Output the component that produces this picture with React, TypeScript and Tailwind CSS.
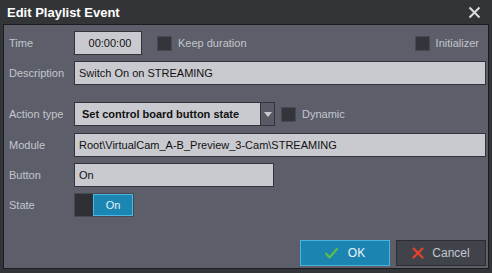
import { FC, ReactNode } from "react";

const Label: FC<{ children: ReactNode }> = ({ children }) => (
  <span className="w-[65px] shrink-0 text-[#c4c6cd]">{children}</span>
);

const Check: FC<{ label: string }> = ({ label }) => (
  <div className="flex items-center gap-[6px]">
    <span className="w-[15px] h-[15px] bg-[#34353b] border border-[#484a53]" />
    <span className="text-[#c4c6cd]">{label}</span>
  </div>
);

const inputCls =
  "h-[24px] bg-[#c9cacf] border border-[#33343a] text-[#111] flex items-center pl-[4px]";

const App: FC = () => {
  return (
    <div className="w-[492px] h-[273px] bg-[#333438] flex flex-col font-['Liberation_Sans',Arial,sans-serif] text-[11px] leading-none">
      {/* title bar */}
      <div className="h-[24px] shrink-0 flex items-center justify-between pl-[7px] pr-[11px]">
        <span className="text-[13px] font-bold text-white">
          Edit Playlist Event
        </span>
        {closeIcon}
      </div>

      {/* body */}
      <div className="mx-[3px] h-[245px] border border-[#1b1c1f] bg-[#5c5f6a] flex flex-col pl-[5px] pr-[2px] pt-[6px] pb-[2px]">
        <div className="h-[24px] flex items-center">
          <Label>Time</Label>
          <div className={`${inputCls} w-[68px] justify-center pl-0`}>
            00:00:00
          </div>
          <div className="ml-[15px]">
            <Check label="Keep duration" />
          </div>
          <div className="ml-auto mr-[7px]">
            <Check label="Initializer" />
          </div>
        </div>

        <div className="h-[24px] flex items-center mt-[6px]">
          <Label>Description</Label>
          <div className={`${inputCls} flex-1`}>Switch On on STREAMING</div>
        </div>

        <div className="h-[24px] flex items-center mt-[17px]">
          <Label>Action type</Label>
          <div className="h-[24px] w-[201px] flex border border-[#33343a]">
            <div className="flex-1 bg-[#c9cacf] flex items-center pl-[7px] font-bold text-[#111]">
              Set control board button state
            </div>
            <div className="w-[14px] bg-[#585b65] border-l border-[#33343a] flex items-center justify-center">
              {arrowIcon}
            </div>
          </div>
          <div className="ml-[6px]">
            <Check label="Dynamic" />
          </div>
        </div>

        <div className="h-[24px] flex items-center mt-[7px]">
          <Label>Module</Label>
          <div className={`${inputCls} flex-1`}>
            Root\VirtualCam_A-B_Preview_3-Cam\STREAMING
          </div>
        </div>

        <div className="h-[24px] flex items-center mt-[6px]">
          <Label>Button</Label>
          <div className={`${inputCls} w-[200px]`}>On</div>
        </div>

        <div className="h-[24px] flex items-center mt-[6px]">
          <Label>State</Label>
          <div className="h-[24px] w-[60px] flex border border-[#474951]">
            <div className="w-[18px] bg-[#2f3035]" />
            <div className="flex-1 bg-[#1b86b4] border border-[#4cb6e4] flex items-center justify-center text-[#e6f0f5]">
              On
            </div>
          </div>
        </div>

        <div className="flex-1" />

        <div className="flex justify-end gap-[6px]">
          <button className="w-[90px] h-[26px] bg-[#1b84b0] border border-[#47b4e4] flex items-center justify-center gap-[10px] text-[#eef4f7] text-[12px]">
            {okIcon}
            <span>OK</span>
          </button>
          <button className="w-[90px] h-[26px] bg-[#41434b] border border-[#2c2d32] flex items-center justify-center gap-[8px] text-[#c3c7cf] text-[12px]">
            {cancelIcon}
            <span>Cancel</span>
          </button>
        </div>
      </div>
    </div>
  );
};

export default App;

const closeIcon = (
  <svg width="13" height="13" viewBox="0 0 13 13" fill="none">
    <path
      d="M1.5 1.5L11.5 11.5M11.5 1.5L1.5 11.5"
      stroke="#dcdcdc"
      strokeWidth="2"
    />
  </svg>
);

const arrowIcon = (
  <svg width="8" height="5" viewBox="0 0 8 5">
    <path d="M0 0H8L4 5Z" fill="#c9cacf" />
  </svg>
);

const okIcon = (
  <svg width="13" height="11" viewBox="0 0 13 11" fill="none">
    <path
      d="M1 5.5L4.5 9.5L12 1"
      stroke="#5cbf4a"
      strokeWidth="2"
      strokeLinecap="round"
      strokeLinejoin="round"
    />
  </svg>
);

const cancelIcon = (
  <svg width="12" height="12" viewBox="0 0 12 12" fill="none">
    <path
      d="M1.5 1.5L10.5 10.5M10.5 1.5L1.5 10.5"
      stroke="#e8412c"
      strokeWidth="2.2"
      strokeLinecap="round"
    />
  </svg>
);
